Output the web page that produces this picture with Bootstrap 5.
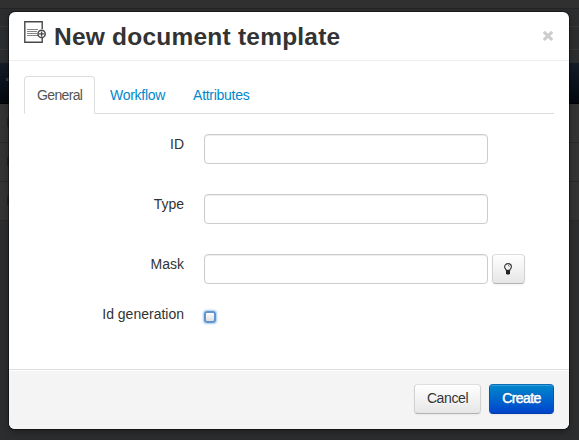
<!DOCTYPE html>
<html lang="en">
<head>
<meta charset="utf-8">
<meta name="viewport" content="width=device-width, initial-scale=1">
<title>New document template</title>
<link href="https://cdn.jsdelivr.net/npm/bootstrap@5.3.0/dist/css/bootstrap.min.css" rel="stylesheet">
<style>
html, body { height: 440px; overflow: hidden; }
body { font: 14px/20px "Liberation Sans", Arial, sans-serif; color: #333; background: #2b2d2f; }
.backdrop-page { position: absolute; inset: 0; }
.bar-top { height: 8px; background: #303030; }
.bar-sub { height: 55px; background: #2c2d2e; border-top: 1px solid #252525; }
.bar-sub div { height: 18px; border-bottom: 1px solid #373737; }
.bar-sub div + div { height: 23px; }
.bar-head { height: 41px; background: linear-gradient(#141c28, #03080e); border-bottom: 1px solid #000; padding: 15px 0 0 6px; }
.bar-head i { display: block; width: 3px; height: 3px; background: #303a44; }
.bar-row { height: 39px; background: #333; border-bottom: 1px solid #292929; padding: 14px 0 0 7px; }
.bar-row i { display: block; width: 3px; height: 9px; background: #242424; }
.dialog-wrap { position: relative; width: 560px; margin: 0 0 0 9px; padding-top: 12px; }
.modal-content { height: 417px; border: 0; border-radius: 6px; color: #333; background: #fff; box-shadow: 0 0 0 1px rgba(0,0,0,.4), 0 3px 7px rgba(0,0,0,.35); }
.modal-header { height: 49px; padding: 9px 15px; border-bottom: 1px solid #eee; }
.modal-title { font-size: 24.5px; line-height: 30px; font-weight: 700; margin-left: 8px; padding-top: 1px; letter-spacing: .22px; white-space: nowrap; color: #333; }
.doc-icon { width: 22px; height: 22px; display: block; }
.close-x { width: 12px; height: 12px; display: block; margin: 9px 0 0 auto; }
.modal-body { padding: 15px; }
.nav-tabs { border-bottom: 1px solid #ddd; height: 38px; }
.nav-tabs .nav-link { height: 38px; padding: 8px 12px 9px; margin-right: 2px; border-radius: 4px 4px 0 0; color: #08c; font-size: 14px; line-height: 20px; letter-spacing: -.28px; }
.nav-tabs .nav-link.active { width: 71px; letter-spacing: -.65px; color: #555; background: #fff; border-color: #ddd #ddd #fff; }
.field-row { height: 60px; }
.field-row-last { margin-top: -10px; }
.field-label { width: 160px; text-align: right; }
.field-input { width: 284px; height: 30px; margin-left: 20px; border: 1px solid #ccc; border-radius: 4px; padding: 4px 6px; background: #fff; box-shadow: inset 0 1px 1px rgba(0,0,0,.075); }
.btn-legacy { height: 30px; padding: 3px 12px 5px; font-size: 14px; letter-spacing: -.4px; line-height: 20px; border-radius: 4px; color: #333; border: 1px solid; border-color: #dedede #d2d2d2 #b3b3b3; background: linear-gradient(#fff, #e6e6e6); box-shadow: inset 0 1px 0 rgba(255,255,255,.2), 0 1px 2px rgba(0,0,0,.05); text-shadow: 0 1px 1px rgba(255,255,255,.75); }
.btn-create { width: 65px; color: #fff; letter-spacing: -.55px; border-color: #0a6cb8 #0754bd #003ca5; background: linear-gradient(#08c, #04c); text-shadow: 0 -1px 0 rgba(0,0,0,.25); -webkit-text-stroke: .5px #fff; }
.btn-cancel { width: 67px; }
.btn-bulb { width: 33px; padding: 0 1px 1px 0; margin-left: 4px; }
.check-box { appearance: none; width: 12px; height: 12px; margin: 7px 0 0 20px; border: 2px solid #6295ce; border-radius: 3px; background: linear-gradient(#fff, #ddd); box-shadow: 0 0 2px 1px #a5caee; }
.modal-footer { height: 60px; padding: 14px 15px 15px; gap: 8px; background: #f4f4f4; border-top: 1px solid #ddd; border-radius: 0 0 6px 6px; box-shadow: inset 0 1px 0 #fff; }
.modal-footer > * { margin: 0; }
</style>
<script src="https://cdn.jsdelivr.net/npm/bootstrap@5.3.0/dist/js/bootstrap.bundle.min.js"></script>
</head>
<body>
<div class="backdrop-page" aria-hidden="true">
  <div class="bar-top"></div>
  <div class="bar-sub"><div></div><div></div></div>
  <div class="bar-head"><i></i></div>
  <div class="bar-row"><i></i></div>
  <div class="bar-row"><i></i></div>
  <div class="bar-row"><i></i></div>
</div>
<div class="dialog-wrap">
  <div class="modal-content" role="dialog" aria-label="New document template">
    <div class="modal-header align-items-start">
      <div class="d-flex align-items-start">
        <svg class="doc-icon" viewBox="0 0 22 22" fill="none">
          <path d="M18.2 8V.8H.8v20.4h17.4V17" stroke="#484848" stroke-width="1.4"/>
          <path d="M3 8.5h11M3 10.5h10M3 12.5h10M3 14.5h12" stroke="#858585"/>
          <circle cx="17.6" cy="12.9" r="3.6" fill="#fff" stroke="#484848" stroke-width="1.5"/>
          <path d="M17.6 10.4v5M15.1 12.9h5" stroke="#484848" stroke-width="1.3"/>
        </svg>
        <h3 class="modal-title">New document template</h3>
      </div>
      <svg class="close-x" viewBox="0 0 12 12"><path d="M1.8 1.8l8.4 8M10.2 1.8l-8.4 8" stroke="#ccc" stroke-width="3"/></svg>
    </div>
    <div class="modal-body">
      <ul class="nav nav-tabs flex-nowrap">
        <li class="nav-item"><a class="nav-link active" href="#">General</a></li>
        <li class="nav-item"><a class="nav-link" href="#">Workflow</a></li>
        <li class="nav-item"><a class="nav-link" href="#">Attributes</a></li>
      </ul>
      <form class="pt-3 mt-1">
        <div class="field-row d-flex align-items-start"><label class="field-label">ID</label><input class="field-input" type="text"></div>
        <div class="field-row d-flex align-items-start"><label class="field-label">Type</label><input class="field-input" type="text"></div>
        <div class="field-row d-flex align-items-start"><label class="field-label">Mask</label><input class="field-input" type="text">
          <button type="button" class="btn btn-legacy btn-bulb d-flex align-items-center justify-content-center" aria-label="Hint">
            <svg width="8" height="12" viewBox="0 0 8 12" fill="none"><path d="M2.3 7.4C2.3 6 .6 5.5.6 3.8a3.4 3.2 0 0 1 6.8 0C7.4 5.5 5.7 6 5.7 7.4z" stroke="#333" stroke-width="1.1"/><path d="M4 2.4q1.3 0 1.4 1.3" stroke="#555" stroke-width=".8"/><path d="M2 7.5h4v2.8L5.2 11.6H2.8L2 10.3z" fill="#222"/></svg>
          </button></div>
        <div class="field-row-last d-flex align-items-start"><label class="field-label">Id generation</label><input class="check-box" type="checkbox"></div>
      </form>
    </div>
    <div class="modal-footer flex-nowrap align-items-start">
      <button type="button" class="btn btn-legacy btn-cancel px-0">Cancel</button>
      <button type="button" class="btn btn-legacy btn-create px-0">Create</button>
    </div>
  </div>
</div>
</body>
</html>
